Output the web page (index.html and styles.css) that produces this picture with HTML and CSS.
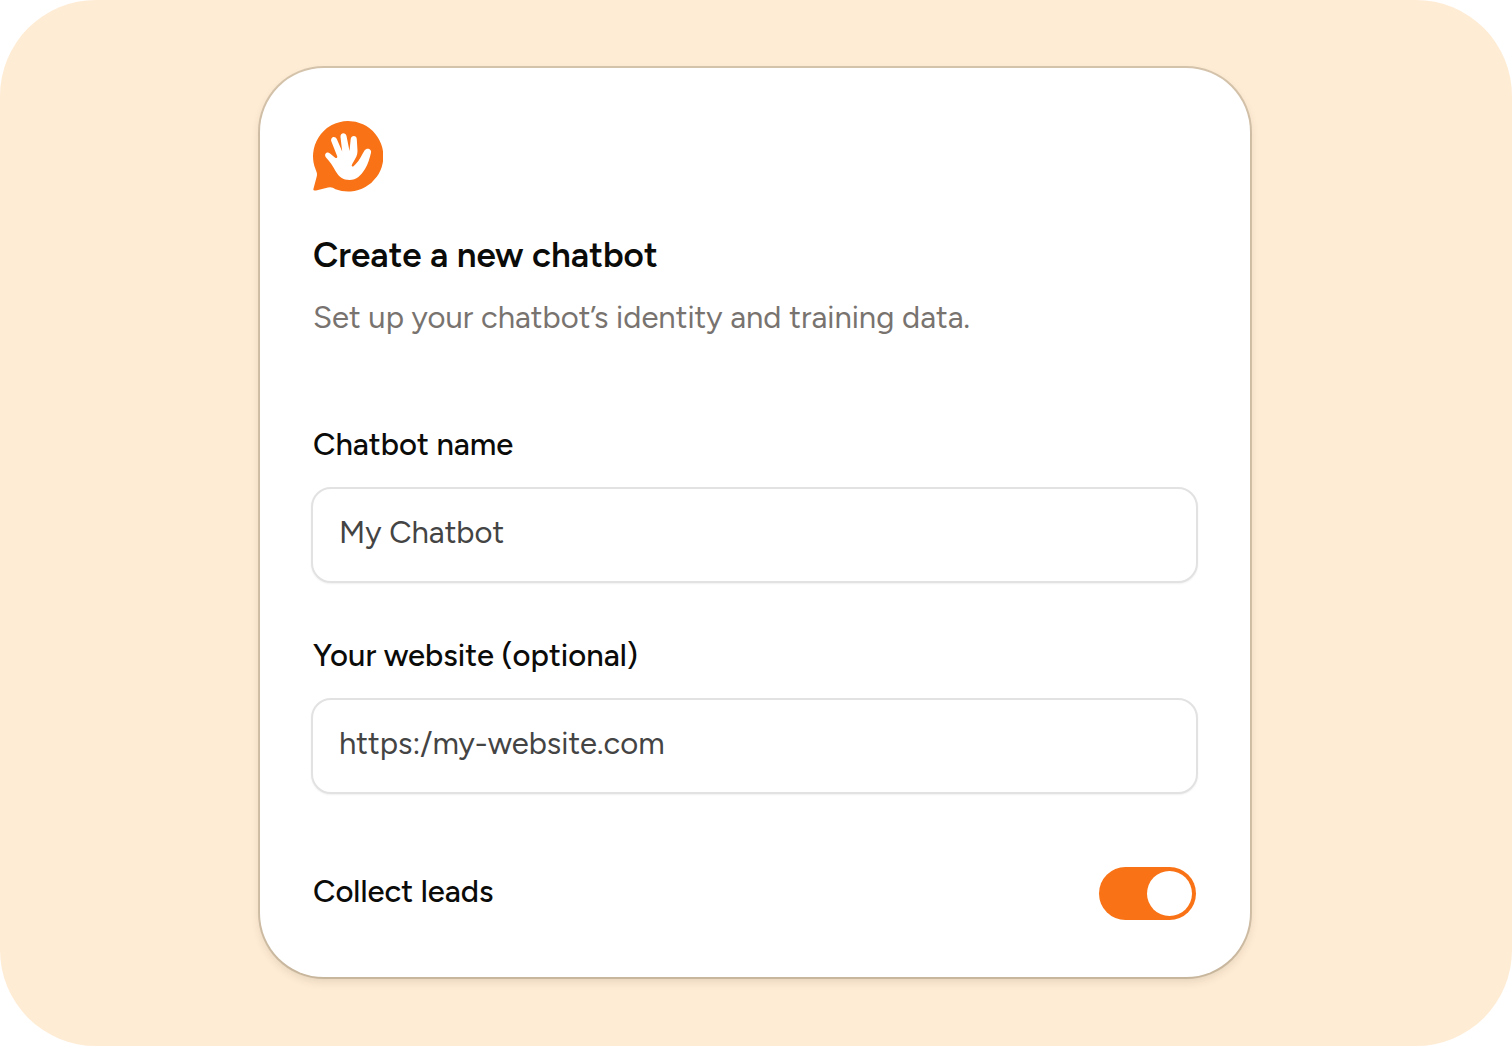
FILE: index.html
```html
<!DOCTYPE html>
<html lang="en">
<head>
  <meta charset="utf-8">
  <meta name="viewport" content="width=device-width, initial-scale=1">
  <title>Create a new chatbot</title>
  <link rel="stylesheet" href="styles.css">
</head>
<body>
  <main class="stage">
    <form class="card">
      <header class="intro">
        <svg class="logo" viewBox="0 0 72 72" aria-hidden="true">
          <path class="logo-bubble" d="M37 1a35.300 35.300 0 1 1-12.500 68.300Q21 66.500 17 67.500L5 70.400Q2 71.200 2.400 69L5.600 57Q6.600 54 5 50.500A35.300 35.300 0 0 1 37 1Z"/>
          <path class="logo-hand" d="M24.500 51C22 46 19 42 15 37.500C12.500 34.300 15.900 30.900 19 33.500L24.200 37.700C25.500 38.600 26.600 37.600 26.200 36.200L20.400 21.600C18.900 17.200 24 15 25.900 19.200L31.200 31.500L29.500 17C29 12.500 34.600 11.800 35.500 16L38.500 31L39.700 19C40.200 14.900 45.800 15.200 45.800 19.200L46.500 31C46.600 35.500 44.500 38 42.700 41.500C41.500 43.800 40 45.300 41 46.300C42 47.200 43.200 45.500 44.500 44.200C49 40 50.500 35.500 53.500 30.600C55.800 27 61 28.800 60 32.800C58.600 38.500 57 44.500 54 49C50 55.500 45.500 60 38.500 60C32 60 28 57 24.500 51Z"/>
        </svg>
        <h1 class="title">Create a new chatbot</h1>
        <p class="subtitle">Set up your chatbot’s identity and training data.</p>
      </header>
      <div class="field">
        <label class="label" for="name">Chatbot name</label>
        <input class="input" id="name" type="text" value="My Chatbot">
      </div>
      <div class="field">
        <label class="label" for="website">Your website (optional)</label>
        <input class="input" id="website" type="text" value="https:/my-website.com">
      </div>
      <div class="toggle-row">
        <label class="label" for="leads">Collect leads</label>
        <input class="toggle" id="leads" type="checkbox" role="switch" checked>
      </div>
    </form>
  </main>
</body>
</html>
```

FILE: styles.css
```css
* {
  box-sizing: border-box;
}

body {
  margin: 0;
  background: #fff;
  color: #0b0b0a;
  font-family: Figtree, Lato, "Noto Sans", sans-serif;
  font-size: 31px;
  line-height: 40px;
}

.stage {
  display: flex;
  align-items: center;
  justify-content: center;
  min-height: 100vh;
  padding: 48px 26px 50px 24px;
  border-radius: 96px;
  background: #ffecd5;
}

.card {
  display: flex;
  flex-direction: column;
  gap: 53px;
  width: 100%;
  max-width: 990px;
  padding: 52px 52px 57px 51px;
  border-radius: 64px;
  background: #fff;
  box-shadow: 0 0 0 2px rgb(60 50 20 / 20%), 0 4px 10px rgb(60 40 0 / 14%);
}

.intro {
  margin-bottom: 34px;
}

.logo {
  display: block;
  width: 72px;
  height: 72px;
}

.logo-bubble {
  fill: #f97316;
}

.logo-hand {
  fill: #fff;
}

.title {
  margin: 39px 2px 19px;
  font-size: 35px;
  font-weight: 600;
  line-height: 48px;
}

.subtitle {
  margin: 0 2px;
  color: #78736f;
}

.field {
  display: flex;
  flex-direction: column;
  gap: 22px;
}

.label {
  padding: 0 2px;
  font-weight: 500;
}

.input {
  width: 100%;
  height: 96px;
  padding: 0 26px 4px;
  border: 2px solid #e2e2e2;
  border-radius: 20px;
  background: #fff;
  box-shadow: 0 1px 2px rgb(0 0 0 / 6%);
  color: #444;
  font: inherit;
}

.toggle-row {
  display: flex;
  align-items: center;
  justify-content: space-between;
  margin-top: 20px;
  padding-right: 2px;
}

.toggle-row .label {
  padding-bottom: 3px;
}

.toggle {
  appearance: none;
  display: flex;
  width: 97px;
  height: 53px;
  margin: 0;
  padding: 4px;
  border-radius: 27px;
  background: #d6d3d1;
}

.toggle::before {
  content: "";
  width: 45px;
  height: 45px;
  border-radius: 50%;
  background: #fff;
}

.toggle:checked {
  justify-content: flex-end;
  background: #f97316;
}
```
